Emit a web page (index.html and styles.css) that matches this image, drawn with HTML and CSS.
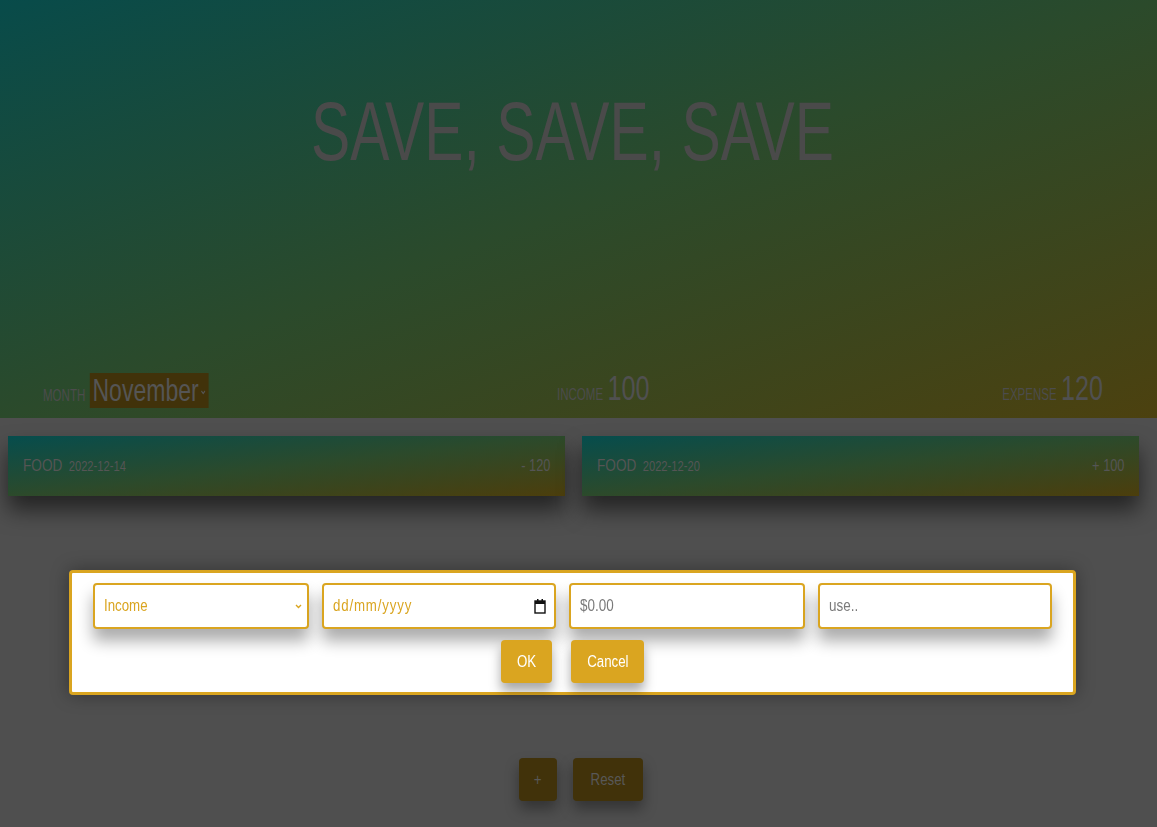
FILE: index.html
```html
<!DOCTYPE html>
<html lang="en">
<head>
<meta charset="utf-8">
<title>Save, Save, Save</title>
<link rel="stylesheet" href="styles.css">
</head>
<body>
<header class="hero">
  <h1 class="title"><span class="title-text">SAVE, SAVE, SAVE</span></h1>
  <div class="stats">
    <div class="stat stat-month">
      <span class="label">MONTH</span>
      <span class="month-select">November<svg class="chev" width="7" height="5" viewBox="0 0 7 5"><polyline points="1,1 3.5,3.5 6,1" fill="none" stroke="#555" stroke-width="1.4"/></svg></span>
    </div>
    <div class="stat stat-income">
      <span class="label">INCOME</span>
      <span class="value">100</span>
    </div>
    <div class="stat stat-expense">
      <span class="label">EXPENSE</span>
      <span class="value">120</span>
    </div>
  </div>
</header>

<main class="list">
  <div class="card">
    <span class="card-main"><span class="cat">FOOD</span><span class="date">2022-12-14</span></span>
    <span class="amount">- 120</span>
  </div>
  <div class="card">
    <span class="card-main"><span class="cat">FOOD</span><span class="date">2022-12-20</span></span>
    <span class="amount">+ 100</span>
  </div>
</main>

<div class="actions">
  <button class="dim-btn plus"><span class="btn-text">+</span></button>
  <button class="dim-btn reset"><span class="btn-text">Reset</span></button>
</div>

<div class="modal">
  <div class="fields">
    <div class="field f-type">
      <span class="gold-text">Income</span>
      <svg class="chev" width="7" height="5" viewBox="0 0 7 5"><polyline points="1,1 3.5,3.5 6,1" fill="none" stroke="#daa520" stroke-width="1.4"/></svg>
    </div>
    <div class="field f-date">
      <span class="gold-text mono">dd/mm/yyyy</span>
      <svg class="cal" width="12" height="16" viewBox="0 0 12 16"><rect x="1" y="3" width="10" height="12" fill="none" stroke="#111" stroke-width="1.4"/><rect x="1" y="3" width="10" height="3" fill="#111"/><rect x="3" y="1" width="1.5" height="3" fill="#111"/><rect x="7.5" y="1" width="1.5" height="3" fill="#111"/></svg>
    </div>
    <div class="field f-amount">
      <input class="inp" type="text" placeholder="$0.00">
    </div>
    <div class="field f-note">
      <input class="inp" type="text" placeholder="use..">
    </div>
  </div>
  <div class="buttons">
    <button class="gold-btn ok"><span class="btn-text">OK</span></button>
    <button class="gold-btn cancel"><span class="btn-text">Cancel</span></button>
  </div>
</div>
</body>
</html>
```

FILE: styles.css
```css
* { box-sizing: border-box; }

body {
  margin: 0;
  background: #4f4f4f;
  font-family: "Liberation Sans", Arial, sans-serif;
  color: #4d4d4d;
  min-height: 827px;
  overflow: hidden;
}

/* ---------- header ---------- */
.hero {
  height: 418px;
  background: linear-gradient(to bottom right, #084b4a 0%, #2b4a2b 50%, #4c410f 100%);
  display: flex;
  flex-direction: column;
  padding-top: 89px;
}

.title {
  margin: 0;
  text-align: center;
  font-weight: 400;
  font-size: 84px;
  line-height: 1;
  color: #4a4a4a;
  padding-right: 12px;
}

.title-text {
  display: inline-block;
  transform: scaleX(0.7);
  transform-origin: center;
}

.stats {
  margin-top: auto;
  display: grid;
  grid-template-columns: 514px 1fr auto;
  align-items: end;
  padding: 0 54px 10px 43px;
}

.stat {
  display: flex;
  align-items: baseline;
  gap: 6px;
  transform: scaleX(0.72);
  transform-origin: left bottom;
  justify-self: start;
}

.stat-expense {
  transform-origin: right bottom;
  justify-self: end;
}

.label {
  font-size: 16px;
  color: #4c4c4c;
}

.month-select {
  display: inline-flex;
  align-items: center;
  gap: 3px;
  background: #41320a;
  height: 35px;
  line-height: 35px;
  padding: 0 4px;
  font-size: 32px;
  color: #555;
}

.month-select .chev { margin-top: 4px; }

.value {
  font-size: 35px;
  color: #505050;
}

/* ---------- list ---------- */
.list {
  display: grid;
  grid-template-columns: 557px 557px;
  gap: 17px;
  padding: 18px 8px 0;
}

.card {
  height: 60px;
  display: flex;
  align-items: center;
  padding: 0 15px;
  background: linear-gradient(to bottom right, #064d4d 0%, #2c4a2b 50%, #4c3e0c 100%);
  box-shadow: 0 14px 22px rgba(0, 0, 0, 0.55);
  color: #555;
}

.card-main {
  display: inline-flex;
  align-items: baseline;
  transform: scaleX(0.8);
  transform-origin: left center;
}

.cat { font-size: 17px; }
.date { font-size: 14px; margin-left: 8px; }

.amount {
  margin-left: auto;
  font-size: 16px;
  transform: scaleX(0.8);
  transform-origin: right center;
}

/* ---------- bottom actions ---------- */
.actions {
  display: flex;
  justify-content: center;
  gap: 16px;
  margin-top: 262px;
  padding-left: 5px;
}

.dim-btn {
  height: 43px;
  border: none;
  border-radius: 4px;
  background: #41320a;
  color: #585858;
  font-family: inherit;
  font-size: 16px;
  padding: 0;
  box-shadow: 0 8px 14px rgba(0, 0, 0, 0.35);
}

.btn-text {
  display: inline-block;
  transform: scaleX(0.83);
}

.plus { width: 38px; }
.reset { width: 70px; }

/* ---------- modal ---------- */
.modal {
  position: fixed;
  left: 69px;
  top: 570px;
  width: 1007px;
  height: 125px;
  background: #fff;
  border: 3px solid #daa520;
  border-radius: 4px;
  box-shadow: 0 0 18px rgba(0, 0, 0, 0.35);
  padding: 10px 20px 9px;
}

.fields {
  display: flex;
  justify-content: center;
  gap: 13px;
}

.field {
  height: 46px;
  border: 2px solid #daa520;
  border-radius: 4px;
  background: #fff;
  display: flex;
  align-items: center;
  padding: 0 9px;
  overflow: hidden;
  box-shadow: 0 12px 16px rgba(0, 0, 0, 0.33);
}

.f-type { width: 216px; padding-right: 5px; }
.f-date { width: 234px; padding-right: 8px; }
.f-amount { width: 236px; }
.f-note { width: 234px; }

.gold-text {
  color: #daa520;
  font-size: 16px;
  flex: 1;
  transform: scaleX(0.83);
  transform-origin: left center;
}

.mono { letter-spacing: 1px; }

.inp {
  border: none;
  outline: none;
  flex: none;
  width: 120%;
  padding: 0;
  font-family: inherit;
  font-size: 16px;
  background: transparent;
  transform: scaleX(0.84);
  transform-origin: left center;
}

.inp::placeholder { color: #7a7a7a; }

.buttons {
  display: flex;
  justify-content: center;
  gap: 19px;
  margin-top: 11px;
}

.gold-btn {
  height: 43px;
  border: none;
  border-radius: 4px;
  background: #daa520;
  color: #fff;
  font-family: inherit;
  font-size: 16px;
  padding: 0;
  box-shadow: 0 8px 12px rgba(0, 0, 0, 0.35);
}

.ok { width: 51px; }
.cancel { width: 73px; }
```
